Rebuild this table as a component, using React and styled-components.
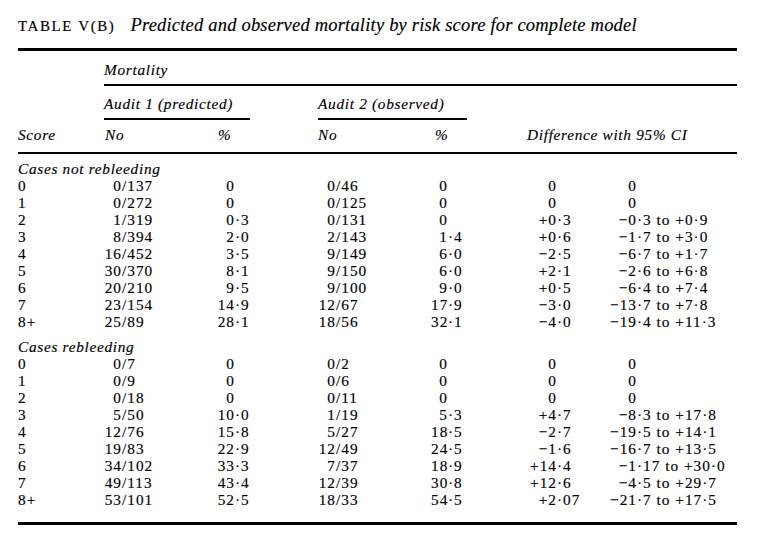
import React from "react";
import styled, { createGlobalStyle } from "styled-components";

const GlobalStyle = createGlobalStyle`
  html, body { margin: 0; padding: 0; background: #fff; }
  body {
    font-family: "Liberation Serif", "Times New Roman", serif;
    color: #000;
  }
`;

const Page = styled.div`
  width: 719px;
  padding: 15px 21px 0 18px;
  -webkit-text-stroke: 0.15px #000;
`;

const Caption = styled.div`
  display: flex;
  align-items: baseline;
  gap: 15px;
  line-height: 20px;
`;

const TableNo = styled.span`
  font-size: 15px;
  letter-spacing: 1.6px;
  text-transform: uppercase;
`;

const CaptionText = styled.span`
  font-size: 18.5px;
  letter-spacing: 0.2px;
  font-style: italic;
`;

const Rule = styled.div`
  grid-column: ${(p) => p.$from || 1} / -1;
  height: ${(p) => p.$h || 2}px;
  background: #000;
  margin-top: ${(p) => p.$mt || 0}px;
`;

const Grid = styled.div`
  display: grid;
  grid-template-columns: 86px 112px 102px 113px 89px 78px 139px;
  font-size: 15.3px;
  line-height: 17px;
  letter-spacing: 1px;
`;

const Head = styled.div`
  grid-column: ${(p) => p.$col || "auto"};
  font-style: italic;
  letter-spacing: 0.7px;
  padding-left: ${(p) => p.$pl || 0}px;
  margin-top: ${(p) => p.$mt || 0}px;
  white-space: nowrap;
`;

const AuditHead = styled.div`
  grid-column: ${(p) => p.$col};
  margin-top: 9px;
  font-style: italic;
  letter-spacing: 0.7px;
  white-space: nowrap;
`;

const Underlined = styled.div`
  width: ${(p) => p.$w}px;
  padding-bottom: 6px;
  border-bottom: 2px solid #000;
`;

const Section = styled.div`
  grid-column: 1 / -1;
  font-style: italic;
  letter-spacing: 0.7px;
  height: 17px;
  margin-top: ${(p) => p.$mt}px;
`;

const Cell = styled.div`
  white-space: nowrap;
`;

const Int = styled.span`
  display: inline-block;
  width: ${(p) => p.$w}px;
  text-align: right;
`;

const Spacer = styled.div`
  grid-column: 1 / -1;
  height: ${(p) => p.$h}px;
`;

function Aligned({ v, w, sep = "·" }) {
  const i = v.indexOf(sep);
  const lead = i < 0 ? v : v.slice(0, i);
  const rest = i < 0 ? "" : v.slice(i);
  return (
    <Cell>
      <Int $w={w}>{lead}</Int>
      {rest}
    </Cell>
  );
}

const notRebleeding = [
  ["0", "0/137", "0", "0/46", "0", "0", "0"],
  ["1", "0/272", "0", "0/125", "0", "0", "0"],
  ["2", "1/319", "0·3", "0/131", "0", "+0·3", "−0·3 to +0·9"],
  ["3", "8/394", "2·0", "2/143", "1·4", "+0·6", "−1·7 to +3·0"],
  ["4", "16/452", "3·5", "9/149", "6·0", "−2·5", "−6·7 to +1·7"],
  ["5", "30/370", "8·1", "9/150", "6·0", "+2·1", "−2·6 to +6·8"],
  ["6", "20/210", "9·5", "9/100", "9·0", "+0·5", "−6·4 to +7·4"],
  ["7", "23/154", "14·9", "12/67", "17·9", "−3·0", "−13·7 to +7·8"],
  ["8+", "25/89", "28·1", "18/56", "32·1", "−4·0", "−19·4 to +11·3"],
];

const rebleeding = [
  ["0", "0/7", "0", "0/2", "0", "0", "0"],
  ["1", "0/9", "0", "0/6", "0", "0", "0"],
  ["2", "0/18", "0", "0/11", "0", "0", "0"],
  ["3", "5/50", "10·0", "1/19", "5·3", "+4·7", "−8·3 to +17·8"],
  ["4", "12/76", "15·8", "5/27", "18·5", "−2·7", "−19·5 to +14·1"],
  ["5", "19/83", "22·9", "12/49", "24·5", "−1·6", "−16·7 to +13·5"],
  ["6", "34/102", "33·3", "7/37", "18·9", "+14·4", "−1·17 to +30·0"],
  ["7", "49/113", "43·4", "12/39", "30·8", "+12·6", "−4·5 to +29·7"],
  ["8+", "53/101", "52·5", "18/33", "54·5", "+2·07", "−21·7 to +17·5"],
];

function Rows({ data }) {
  return data.map((r) => (
    <React.Fragment key={r[0]}>
      <Cell>{r[0]}</Cell>
      <Aligned v={r[1]} w={18} sep="/" />
      <Aligned v={r[2]} w={19} />
      <Aligned v={r[3]} w={18} sep="/" />
      <Aligned v={r[4]} w={17} />
      <Aligned v={r[5]} w={37} />
      <Aligned v={r[6]} w={39} />
    </React.Fragment>
  ));
}

export default function App() {
  return (
    <Page>
      <GlobalStyle />
      <Caption>
        <TableNo>Table V(B)</TableNo>
        <CaptionText>Predicted and observed mortality by risk score for complete model</CaptionText>
      </Caption>

      <Grid>
        <Rule $h={3} $mt={12} />
        <Head $col="2 / -1" $mt={10}>Mortality</Head>
        <Rule $from={2} $mt={6} />
        <AuditHead $col="2 / 4">
          <Underlined $w={146}>Audit 1 (predicted)</Underlined>
        </AuditHead>
        <AuditHead $col="4 / 6">
          <Underlined $w={149}>Audit 2 (observed)</Underlined>
        </AuditHead>
        <Head $col="1" $mt={6}>Score</Head>
        <Head $col="2" $mt={6} $pl={1}>No</Head>
        <Head $col="3" $mt={6} $pl={2}>%</Head>
        <Head $col="4" $mt={6}>No</Head>
        <Head $col="5" $mt={6} $pl={4}>%</Head>
        <Head $col="6 / -1" $mt={6} $pl={7}>Difference with 95% CI</Head>
        <Rule $mt={9} />

        <Section $mt={6}>Cases not rebleeding</Section>
        <Rows data={notRebleeding} />

        <Section $mt={8}>Cases rebleeding</Section>
        <Rows data={rebleeding} />

        <Spacer $h={14} />
        <Rule $h={3} />
      </Grid>
    </Page>
  );
}
